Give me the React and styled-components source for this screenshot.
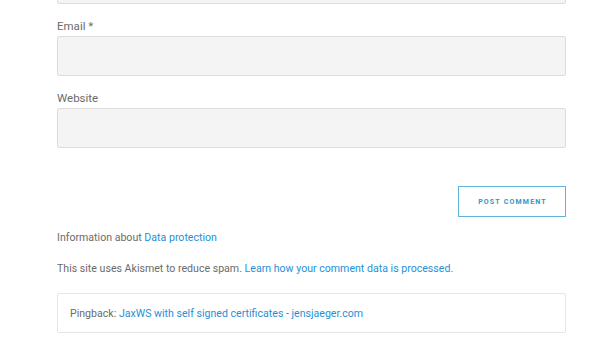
import React from 'react';
import styled, { createGlobalStyle } from 'styled-components';

const GlobalStyle = createGlobalStyle`
  html, body {
    margin: 0;
    padding: 0;
    background: #ffffff;
    overflow: hidden;
  }
  body {
    font-family: Roboto, "Liberation Sans", Arial, sans-serif;
    color: #6b6b6b;
  }
`;

const Page = styled.div`
  width: 509px;
  margin: -36px 0 0 57px;
`;

const Field = styled.div`
  display: flex;
  flex-direction: column;
  margin-bottom: 12px;
`;

const Label = styled.label`
  font-size: 11.5px;
  line-height: 20px;
  color: #6b6b6b;
`;

const Input = styled.input`
  box-sizing: border-box;
  height: 40px;
  width: 100%;
  background: #f4f4f4;
  border: 1px solid #dcdcdc;
  border-radius: 2px;
  margin: 0;
`;

const Actions = styled.div`
  display: flex;
  justify-content: flex-end;
  margin-top: 38px;
`;

const SubmitButton = styled.button`
  box-sizing: border-box;
  width: 108px;
  height: 31px;
  background: #fff;
  border: 1px solid #62b3d9;
  color: #2b96cc;
  font-family: Roboto, "Liberation Sans", Arial, sans-serif;
  font-size: 7px;
  font-weight: 700;
  letter-spacing: 1.2px;
  padding: 0 0 0 1px;
  cursor: pointer;
`;

const Note = styled.p`
  margin: 0;
  font-size: 10.6px;
  line-height: 20px;
  color: #6b6b6b;
`;

const Link = styled.a`
  color: #1f8fd8;
  text-decoration: none;
`;

const Notes = styled.div`
  display: flex;
  flex-direction: column;
  gap: 11px;
  margin-top: 11px;
`;

const Pingback = styled.div`
  box-sizing: border-box;
  margin-top: 14px;
  height: 40px;
  border: 1px solid #e6e6e6;
  border-radius: 2px;
  padding: 0 12px;
  display: flex;
  align-items: center;
  font-size: 10.6px;
  color: #6b6b6b;
`;

export default function App() {
  return (
    <>
      <GlobalStyle />
      <Page>
        <Field>
          <Input type="text" />
        </Field>
        <Field>
          <Label>Email *</Label>
          <Input type="email" />
        </Field>
        <Field>
          <Label>Website</Label>
          <Input type="url" />
        </Field>
        <Actions>
          <SubmitButton>POST COMMENT</SubmitButton>
        </Actions>
        <Notes>
          <Note>
            Information about <Link href="#">Data protection</Link>
          </Note>
          <Note>
            This site uses Akismet to reduce spam.{' '}
            <Link href="#">Learn how your comment data is processed.</Link>
          </Note>
        </Notes>
        <Pingback>
          Pingback:&nbsp;<Link href="#">JaxWS with self signed certificates - jensjaeger.com</Link>
        </Pingback>
      </Page>
    </>
  );
}
